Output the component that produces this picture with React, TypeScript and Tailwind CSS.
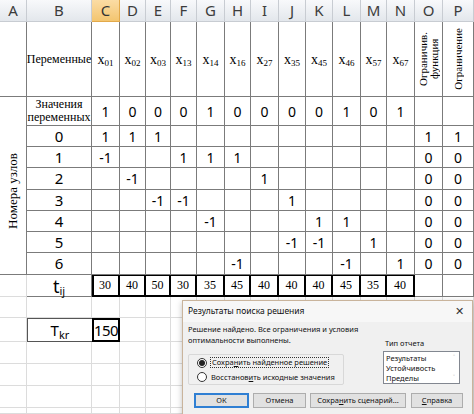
import React from "react";

const COLS = ["A", "B", "C", "D", "E", "F", "G", "H", "I", "J", "K", "L", "M", "N", "O", "P"];
const VARS = ["01", "02", "03", "13", "14", "16", "27", "35", "45", "46", "57", "67"];
const VALUES = [1, 0, 0, 0, 1, 0, 0, 0, 0, 1, 0, 1];
const TIJ = [30, 40, 50, 30, 35, 45, 40, 40, 40, 45, 35, 40];

// node rows: column index (0 = C ... 11 = N, 12 = O, 13 = P) -> value
const NODES: Record<number, number>[] = [
  { 0: 1, 1: 1, 2: 1, 12: 1, 13: 1 },
  { 0: -1, 3: 1, 4: 1, 5: 1, 12: 0, 13: 0 },
  { 1: -1, 6: 1, 12: 0, 13: 0 },
  { 2: -1, 3: -1, 7: 1, 12: 0, 13: 0 },
  { 4: -1, 8: 1, 9: 1, 12: 0, 13: 0 },
  { 7: -1, 8: -1, 10: 1, 12: 0, 13: 0 },
  { 5: -1, 9: -1, 11: 1, 12: 0, 13: 0 },
];

const dark = "border-r border-b border-[#7b7b7b]";
const light = "border-r border-b border-[#dcdcdc]";
const serif = "font-['Liberation_Serif',serif]";
const sans = "font-['Noto_Sans',sans-serif]";
const num = `flex items-center justify-center ${sans} text-[14px] text-black`;

function EmptyRow({ k }: { k: string }) {
  return (
    <>
      {COLS.map((c) => (
        <div key={k + c} className={light} />
      ))}
    </>
  );
}

function Radio({ checked }: { checked?: boolean }) {
  return (
    <span className="flex h-[10px] w-[10px] shrink-0 items-center justify-center rounded-full border border-[#333] bg-white">
      {checked && <span className="h-[6px] w-[6px] rounded-full bg-[#222]" />}
    </span>
  );
}

function Btn({ children, primary, w }: { children: React.ReactNode; primary?: boolean; w: string }) {
  return (
    <div
      className={`flex h-[15px] items-center justify-center whitespace-nowrap bg-[#e1e1e1] text-[7.5px] text-[#111] ${w} ${
        primary ? "border-2 border-[#2f7fd3]" : "border border-[#adadad]"
      }`}
    >
      {children}
    </div>
  );
}

export default function App() {
  return (
    <div className="relative h-[414px] w-[474px] overflow-hidden bg-white">
      <div className="grid grid-cols-[27px_65px_28px_26px_25px_26px_28px_26px_28px_27px_27px_28px_26px_28px_28px_31px] grid-rows-[22px_75px_29px_21px_21px_22px_21px_21px_21px_22px_22px_21px_24px_22px_22px_22px_6px]">
        {/* column headers */}
        {COLS.map((c) => (
          <div
            key={"h" + c}
            className={`flex items-center justify-center border-r border-b ${sans} text-[15px] ${
              c === "C"
                ? "border-[#e2a94a] bg-gradient-to-b from-[#fbdca4] to-[#f3c56f] text-[#333]"
                : "border-[#c8ccd2] bg-gradient-to-b from-[#f8f9fb] to-[#e3e7ec] text-[#3c3c3c]"
            }`}
          >
            {c}
          </div>
        ))}

        {/* variables row */}
        <div className={dark} />
        <div className={`${dark} flex items-center justify-center ${serif} text-[12px]`}>Переменные</div>
        {VARS.map((v) => (
          <div key={"v" + v} className={`${dark} flex items-center justify-center ${serif} text-[14px]`}>
            <span>
              x<sub className="text-[9px]">{v}</sub>
            </span>
          </div>
        ))}
        <div className={`${dark} flex items-center justify-center`}>
          <div className={`rotate-180 text-center ${serif} text-[11px] leading-[11px] [writing-mode:vertical-rl]`}>
            Ограничив.
            <br />
            функция
          </div>
        </div>
        <div className={`${dark} flex items-center justify-center`}>
          <div className={`rotate-180 ${serif} text-[11px] leading-[11px] [writing-mode:vertical-rl]`}>Ограничение</div>
        </div>

        {/* values row */}
        <div className={`${dark} row-span-8 flex items-center justify-center pt-[10px]`}>
          <div className={`rotate-180 ${serif} text-[13px] [writing-mode:vertical-rl]`}>Номера узлов</div>
        </div>
        <div className={`${dark} flex flex-col items-center justify-center ${serif} text-[12px] leading-[13px]`}>
          <span>Значения</span>
          <span>переменных</span>
        </div>
        {VALUES.map((v, i) => (
          <div key={"val" + i} className={`${dark} ${num}`}>
            {v}
          </div>
        ))}
        <div className={dark} />
        <div className={dark} />

        {/* node rows */}
        {NODES.map((row, r) => (
          <React.Fragment key={"n" + r}>
            <div className={`${dark} ${num} text-[15px]`}>{r}</div>
            {Array.from({ length: 14 }).map((_, i) => (
              <div key={`n${r}-${i}`} className={`${dark} ${num}`}>
                {row[i] !== undefined ? row[i] : ""}
              </div>
            ))}
          </React.Fragment>
        ))}

        {/* t_ij row */}
        <div className={light} />
        <div className={`${dark} flex items-center justify-center ${sans} text-[18px] leading-none`}>
          <span>
            t<sub className="text-[11px]">ij</sub>
          </span>
        </div>
        {TIJ.map((t, i) => (
          <div
            key={"t" + i}
            className={`flex items-center justify-center border-r-2 border-b-2 border-black ${serif} text-[12px] ${
              i === 0 ? "shadow-[inset_2px_1px_0_#000]" : "shadow-[inset_0_1px_0_#000]"
            }`}
          >
            {t}
          </div>
        ))}
        <div className={dark} />
        <div className={dark} />

        <EmptyRow k="e1" />

        {/* T_kr row */}
        <div className={light} />
        <div className={`flex items-center justify-center border-y border-l border-[#555] ${sans} text-[15px]`}>
          <span>
            T<sub className="text-[11px]">kr</sub>
          </span>
        </div>
        <div className={`flex items-center justify-center border-2 border-black ${sans} text-[15px] tracking-[-0.5px]`}>150</div>
        {COLS.slice(3).map((c) => (
          <div key={"tk" + c} className={light} />
        ))}

        <EmptyRow k="e2" />
        <EmptyRow k="e3" />
        <EmptyRow k="e4" />
        <EmptyRow k="e5" />
      </div>

      {/* Solver results dialog */}
      <div className={`absolute left-[182px] top-[300px] h-[120px] w-[291px] border border-[#c9b49c] bg-[#f0f0f0] shadow-[0_2px_6px_rgba(0,0,0,0.25)] ${sans} text-[#111]`}>
        <div className="flex h-[21px] items-center justify-between bg-[#f7f7f7] pl-[5px] pr-[8px] text-[8.5px]">
          <span>Результаты поиска решения</span>
          <span className="text-[11px] font-light text-[#333]">✕</span>
        </div>
        <div className="flex pl-[5px] pr-[12px]">
          <div className="flex w-[156px] flex-col">
            <div className="mt-[2px] whitespace-nowrap text-[7.5px] leading-[11px]">
              Решение найдено. Все ограничения и условия
              <br />
              оптимальности выполнены.
            </div>
            <div className="mt-[8px] flex h-[31px] flex-col justify-center gap-[4px] rounded-[2px] border border-[#d8d8d8] pl-[8px] text-[7.5px] whitespace-nowrap">
              <div className="flex items-center gap-[3px]">
                <Radio checked />
                <span className="border border-dotted border-[#333] px-[1px] leading-[9px]">
                  Сохра<u>н</u>ить найденное решение
                </span>
              </div>
              <div className="flex items-center gap-[4px]">
                <Radio />
                <span className="leading-[9px]">
                  Восстанов<u>и</u>ть исходные значения
                </span>
              </div>
            </div>
          </div>
          <div className="ml-auto flex w-[77px] flex-col pt-[16px]">
            <span className="ml-[2px] text-[7.5px] leading-[10px]">Тип отчета</span>
            <div className="mt-[3px] flex h-[33px] border border-[#828790] bg-white">
              <div className="flex flex-1 flex-col pl-[2px] pt-[1px] text-[7.5px] leading-[10px]">
                <span>Результаты</span>
                <span>Устойчивость</span>
                <span>Пределы</span>
              </div>
              <div className="flex w-[10px] flex-col items-center justify-between py-[2px] text-[7px] leading-none text-[#b0b0b0]">
                <span>˄</span>
                <span>˅</span>
              </div>
            </div>
          </div>
        </div>
        <div className="mt-[8px] flex items-center pl-[11px]">
          <Btn primary w="w-[55px]">
            ОК
          </Btn>
          <div className="ml-[4px]">
            <Btn w="w-[53px]">Отмена</Btn>
          </div>
          <div className="ml-[4px]">
            <Btn w="w-[96px]">
              Сохра<u>н</u>ить сценарий...
            </Btn>
          </div>
          <div className="ml-[5px]">
            <Btn w="w-[52px]">
              <u>С</u>правка
            </Btn>
          </div>
        </div>
      </div>
    </div>
  );
}
